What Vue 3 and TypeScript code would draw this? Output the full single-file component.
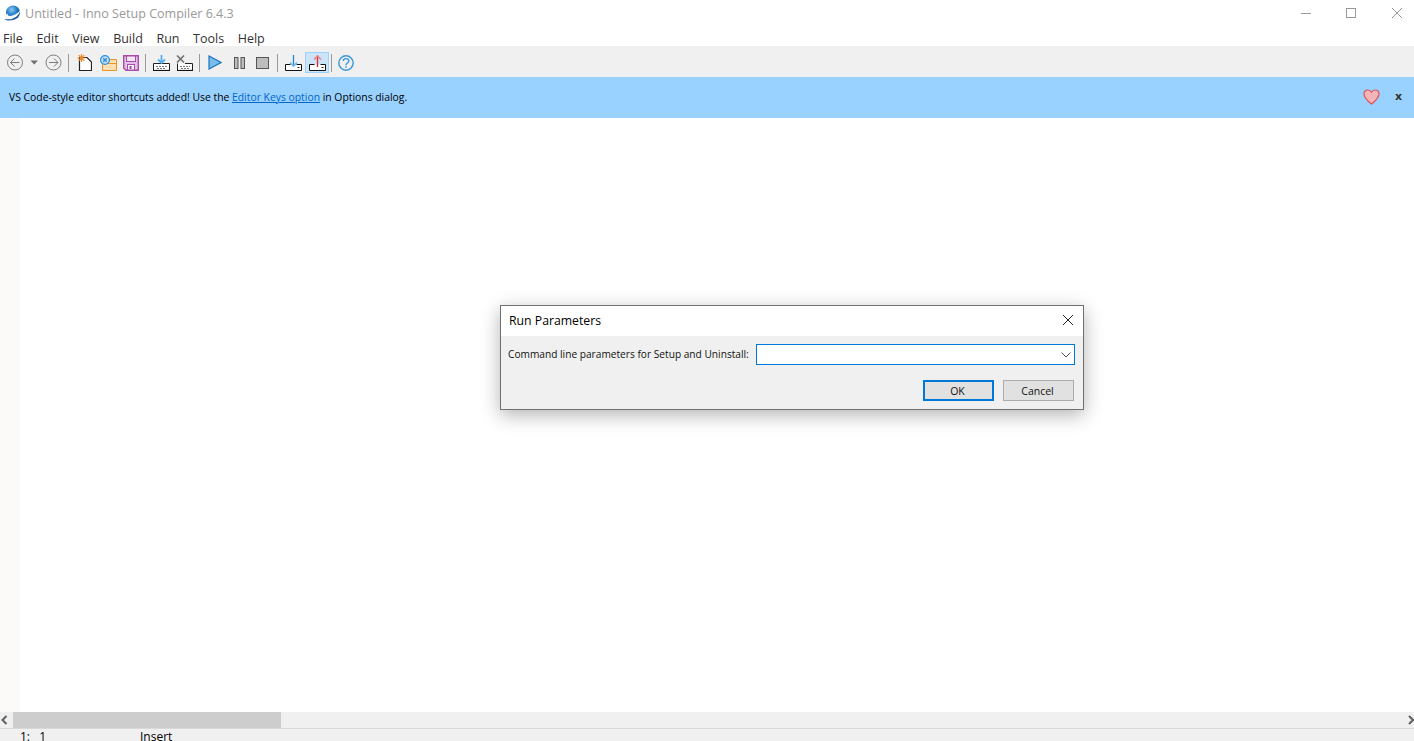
<script setup lang="ts">
const menus: string[] = ['File', 'Edit', 'View', 'Build', 'Run', 'Tools', 'Help']
</script>

<template>
  <div class="app">
    <header class="titlebar">
      <svg class="logo" width="17" height="17" viewBox="0 0 17 17">
        <defs>
          <radialGradient id="globe" cx="0.4" cy="0.3" r="0.8">
            <stop offset="0" stop-color="#8ccbf2" />
            <stop offset="0.5" stop-color="#1f78c8" />
            <stop offset="1" stop-color="#0b3f86" />
          </radialGradient>
        </defs>
        <circle cx="9" cy="7.5" r="7" fill="url(#globe)" />
        <path d="M0.5 14C0 11.5 2 9.5 4 8.5C3.5 10 4 11 6 11C9.5 11 13.5 8.5 16.5 5C15.5 10 10 14.5 5 14.5C3 14.5 1.5 14.5 0.5 14Z" fill="#f4f8fb" />
        <path d="M0.5 14C3 16.5 11 16.5 15.2 10.5C11 14 5.5 15 0.5 14Z" fill="#1d5aa3" />
      </svg>
      <span class="title">Untitled - Inno Setup Compiler 6.4.3</span>
      <div class="winctl">
        <svg width="12" height="12" viewBox="0 0 12 12" class="min"><path d="M1 6.5H11" stroke="#999" fill="none" /></svg>
        <svg width="12" height="12" viewBox="0 0 12 12" class="max"><rect x="1.5" y="1.5" width="9" height="9" stroke="#999" fill="none" /></svg>
        <svg width="12" height="12" viewBox="0 0 12 12" class="cls"><path d="M1 1L11 11M11 1L1 11" stroke="#999" fill="none" /></svg>
      </div>
    </header>

    <nav class="menubar">
      <span v-for="m in menus" :key="m" class="menu">{{ m }}</span>
    </nav>

    <div class="toolbar">
      <span class="tb w22">
        <svg width="17" height="17" viewBox="0 0 17 17"><circle cx="8" cy="8.5" r="7.5" fill="none" stroke="#7c7c7c" /><path d="M12.5 8.5H3.5M7.5 4.5L3.5 8.5L7.5 12.5" fill="none" stroke="#7c7c7c" /></svg>
      </span>
      <span class="tb w16">
        <svg width="9" height="5" viewBox="0 0 9 5"><path d="M0.5 0.5H8L4.2 4.5Z" fill="#6e6e6e" /></svg>
      </span>
      <span class="tb w22">
        <svg width="17" height="17" viewBox="0 0 17 17"><circle cx="8.5" cy="8.5" r="7.5" fill="none" stroke="#7c7c7c" /><path d="M4 8.5H13M9 4.5L13 8.5L9 12.5" fill="none" stroke="#7c7c7c" /></svg>
      </span>
      <i class="sep first"></i>
      <span class="tb w23">
        <svg width="15" height="17" viewBox="0 0 15 17">
          <path d="M2.5 3.5H10L14.5 8V16.5H2.5Z" fill="#fff" stroke="#222" stroke-width="1.2" />
          <path d="M4.5 0V8M0.5 4H8.5M1.7 1.2L7.3 6.8M7.3 1.2L1.7 6.8" stroke="#f08a2c" stroke-width="1.2" />
        </svg>
      </span>
      <span class="tb w24">
        <svg width="17" height="16" viewBox="0 0 17 16">
          <path d="M2.5 6.5V15.5H16.5V4.5H9L8 3.5H3.5Z" fill="#fce0b4" stroke="#e8932c" />
          <path d="M2.5 8.5H16.5" stroke="#e8932c" />
          <circle cx="5" cy="5" r="4.4" fill="#bfe0f7" stroke="#2f8fd6" stroke-width="1.2" />
          <path d="M3.2 3.2L6.8 6.8M6.8 3.2L3.2 6.8" stroke="#2f8fd6" stroke-width="1.4" />
        </svg>
      </span>
      <span class="tb w22">
        <svg width="16" height="16" viewBox="0 0 16 16">
          <path d="M0.7 0.7H15.3V15.3H3L0.7 13Z" fill="#e4bfe6" stroke="#a64fa9" stroke-width="1.4" />
          <rect x="3.5" y="1" width="9" height="5.5" fill="#f3e3f4" stroke="#a64fa9" />
          <rect x="4.5" y="9.5" width="7" height="5.5" fill="#f7eff7" stroke="#a64fa9" />
          <rect x="6.5" y="11" width="2" height="3" fill="#a64fa9" />
        </svg>
      </span>
      <i class="sep second"></i>
      <span class="tb w23">
        <svg width="17" height="16" viewBox="0 0 17 16">
          <path d="M0.5 8.5V15.5H16.5V8.5H0.5" fill="#fff" stroke="#222" />
          <path d="M0 15.5H17" stroke="#111" stroke-width="1.2" />
          <path d="M3 11.5H14M4 13.5H13" stroke="#777" stroke-dasharray="2 1" />
          <path d="M8.5 0V8M5 4.5L8.5 8L12 4.5" fill="none" stroke="#56aee8" stroke-width="1.8" />
        </svg>
      </span>
      <span class="tb w23">
        <svg width="17" height="16" viewBox="0 0 17 16">
          <path d="M1.5 8.5V15.5H16.5V8.5H9" fill="#fff" stroke="#222" />
          <path d="M1 15.5H17" stroke="#111" stroke-width="1.2" />
          <path d="M4 11.5H14M5 13.5H13" stroke="#777" stroke-dasharray="2 1" />
          <path d="M1 0.5L8 7.5M8 0.5L1 7.5" stroke="#707070" stroke-width="1.6" />
        </svg>
      </span>
      <i class="sep"></i>
      <span class="tb w24">
        <svg width="14" height="15" viewBox="0 0 14 15"><path d="M1 1L13 7.5L1 14Z" fill="#79bdec" stroke="#1f74bb" stroke-width="1.2" /></svg>
      </span>
      <span class="tb w24">
        <svg width="11" height="12" viewBox="0 0 11 12"><rect x="0.5" y="0.5" width="3.5" height="11" fill="#bdbdbd" stroke="#555" /><rect x="7" y="0.5" width="3.5" height="11" fill="#bdbdbd" stroke="#555" /></svg>
      </span>
      <span class="tb w23">
        <svg width="13" height="12" viewBox="0 0 13 12"><rect x="0.5" y="0.5" width="12" height="11" fill="#bdbdbd" stroke="#555" /></svg>
      </span>
      <i class="sep"></i>
      <span class="tb w24">
        <svg width="17" height="16" viewBox="0 0 17 16">
          <path d="M5.5 9.5H0.5V15.5H16.5V9.5H11.5" fill="#fff" stroke="#111" />
          <path d="M8.5 0V11" stroke="#1f86d8" stroke-width="1.3" />
          <path d="M5 7.5L8.5 11L12 7.5" fill="none" stroke="#6ab8ec" stroke-width="1.6" />
          <path d="M12.5 12.5H14.5" stroke="#222" />
        </svg>
      </span>
      <span class="tb w24 hot">
        <svg width="17" height="16" viewBox="0 0 17 16">
          <path d="M5.5 9.5H0.5V15.5H16.5V9.5H11.5" fill="#fff" stroke="#111" />
          <path d="M8.5 12V0.5" stroke="#e8202a" stroke-width="1.3" />
          <path d="M5 4.5L8.5 1L12 4.5" fill="none" stroke="#ee7f85" stroke-width="1.6" />
          <path d="M12.5 12.5H14.5" stroke="#222" />
        </svg>
      </span>
      <i class="sep tight"></i>
      <span class="tb w24">
        <svg width="16" height="16" viewBox="0 0 16 16">
          <circle cx="8" cy="8" r="7.2" fill="none" stroke="#3a96d8" stroke-width="1.4" />
          <path d="M5.3 6C5.3 2.8 10.8 2.8 10.8 6C10.8 8 8 8 8 10.2" fill="none" stroke="#3a96d8" stroke-width="1.4" />
          <path d="M8 11.2V12.8" stroke="#3a96d8" stroke-width="1.5" />
        </svg>
      </span>
    </div>

    <div class="infobar">
      <span class="infotext">VS Code-style editor shortcuts added! Use the <a class="link">Editor Keys option</a> in Options dialog.</span>
      <svg class="heart" width="17" height="16" viewBox="0 0 17 16">
        <path d="M8.5 15C6 12.8 1 9.5 1 5C1 2.6 2.7 1 4.8 1C6.4 1 7.7 1.8 8.5 3.2C9.3 1.8 10.6 1 12.2 1C14.3 1 16 2.6 16 5C16 9.5 11 12.8 8.5 15Z" fill="#f3b5b5" stroke="#e0525a" stroke-width="1.2" />
      </svg>
      <span class="dismiss">x</span>
    </div>

    <main class="editor">
      <div class="gutter"></div>
    </main>

    <div class="hscroll">
      <svg width="13" height="16" viewBox="0 0 13 16"><path d="M6.5 4L2.5 8L6.5 12" fill="none" stroke="#606060" stroke-width="2" /></svg>
      <div class="track"><div class="thumb"></div></div>
      <svg width="13" height="16" viewBox="0 0 13 16"><path d="M8 4L12 8L8 12" fill="none" stroke="#606060" stroke-width="2" /></svg>
    </div>

    <footer class="status">
      <span class="pos">1:&nbsp;&nbsp;&nbsp;1</span>
      <span class="mode">Insert</span>
    </footer>

    <div class="dialog">
      <div class="dlg-title">
        <span>Run Parameters</span>
        <svg width="12" height="12" viewBox="0 0 12 12"><path d="M1 1L11 11M11 1L1 11" stroke="#222" fill="none" /></svg>
      </div>
      <div class="dlg-body">
        <div class="dlg-row">
          <label class="dlg-label">Command line parameters for Setup and Uninstall:</label>
          <div class="combo">
            <svg width="10" height="6" viewBox="0 0 10 6"><path d="M0.5 0.5L5 5L9.5 0.5" fill="none" stroke="#555" /></svg>
          </div>
        </div>
        <div class="dlg-btns">
          <button class="btn def">OK</button>
          <button class="btn">Cancel</button>
        </div>
      </div>
    </div>
  </div>
</template>

<style>
html, body { margin: 0; height: 100%; overflow: hidden; background: #fff; }
</style>

<style scoped>
.app {
  position: relative;
  width: 1414px;
  height: 741px;
  display: flex;
  flex-direction: column;
  overflow: hidden;
  font-family: "Open Sans", "Noto Sans", sans-serif;
  font-size: 12px;
  color: #000;
}
.titlebar {
  height: 26px;
  display: flex;
  align-items: center;
  padding-left: 4px;
  background: #fff;
  flex: none;
}
.logo { margin-right: 4px; }
.title { color: #999; font-size: 12.55px; }
.winctl { margin-left: auto; display: flex; align-items: center; padding-right: 11px; }
.min { margin-right: 33px; }
.max { margin-right: 34px; }
.menubar {
  height: 20px;
  box-sizing: border-box;
  padding: 4px 0 0 3px;
  display: flex;
  align-items: center;
  background: #fff;
  gap: 13.6px;
  flex: none;
  font-size: 12.5px;
  color: #333;
}
.toolbar {
  height: 31px;
  box-sizing: border-box;
  padding: 2px 0 0 4px;
  background: #f0f0f0;
  display: flex;
  align-items: center;
  flex: none;
}
.tb { display: flex; align-items: center; justify-content: center; height: 21px; flex: none; box-sizing: border-box; }
.w16 { width: 16px; }
.w22 { width: 22px; }
.w23 { width: 23px; }
.w24 { width: 24px; }
.hot { background: #cce4f7; border: 1px solid #99d1ff; }
.sep { width: 1px; height: 18px; background: #999; margin: 0 3px; flex: none; }
.first { margin: 0 4px; }
.second { margin: 0 4px 0 3px; }
.tight { margin: 0 2px; }
.infobar {
  height: 41px;
  box-sizing: border-box;
  padding: 0 0 2px 9px;
  background: #99d1ff;
  display: flex;
  align-items: center;
  flex: none;
  font-size: 10.37px;
}
.infotext { flex: 1; }
.link { color: #0066cc; text-decoration: underline; }
.heart { margin-right: 15px; }
.dismiss { font-weight: 700; font-family: "DejaVu Sans", sans-serif; font-size: 11px; margin-right: 12px; color: #333; }
.editor { flex: 1; display: flex; background: #fff; min-height: 0; }
.gutter { width: 20px; background: #fbfaf8; }
.hscroll { height: 16px; background: #f0f0f0; display: flex; align-items: center; flex: none; }
.track { flex: 1; height: 16px; }
.thumb { width: 268px; height: 16px; background: #cdcdcd; }
.status {
  height: 13px;
  box-sizing: border-box;
  border-top: 1px solid #d9d9d9;
  background: #f0f0f0;
  flex: none;
  display: flex;
  overflow: hidden;
  font-size: 12px;
  line-height: 16px;
  padding-left: 20px;
}
.pos { width: 120px; }
.dialog {
  position: absolute;
  left: 500px;
  top: 305px;
  width: 584px;
  height: 105px;
  box-sizing: border-box;
  border: 1px solid #707070;
  background: #f0f0f0;
  box-shadow: 0 5px 18px rgba(0, 0, 0, 0.3);
  display: flex;
  flex-direction: column;
}
.dlg-title {
  height: 30px;
  box-sizing: border-box;
  padding: 0 9px 2px 8px;
  background: #fff;
  display: flex;
  align-items: center;
  justify-content: space-between;
  font-size: 12.25px;
  flex: none;
}
.dlg-body { flex: 1; display: flex; flex-direction: column; padding: 8px 8px 0 7px; }
.dlg-row { display: flex; align-items: center; justify-content: space-between; }
.dlg-label { font-size: 10.16px; color: #111; white-space: nowrap; margin-top: -1px; }
.combo {
  width: 319px;
  height: 21px;
  box-sizing: border-box;
  background: #fff;
  border: 1px solid #0078d7;
  display: flex;
  align-items: center;
  justify-content: flex-end;
  padding-right: 3px;
}
.dlg-btns { display: flex; justify-content: flex-end; gap: 9px; margin-top: 15px; padding-right: 1px; }
.btn {
  width: 71px;
  height: 21px;
  box-sizing: border-box;
  background: #e1e1e1;
  border: 1px solid #adadad;
  font: inherit;
  font-size: 10.5px;
  padding: 0 2px 0 0;
  color: #111;
}
.def { border: 2px solid #0078d7; }
</style>
